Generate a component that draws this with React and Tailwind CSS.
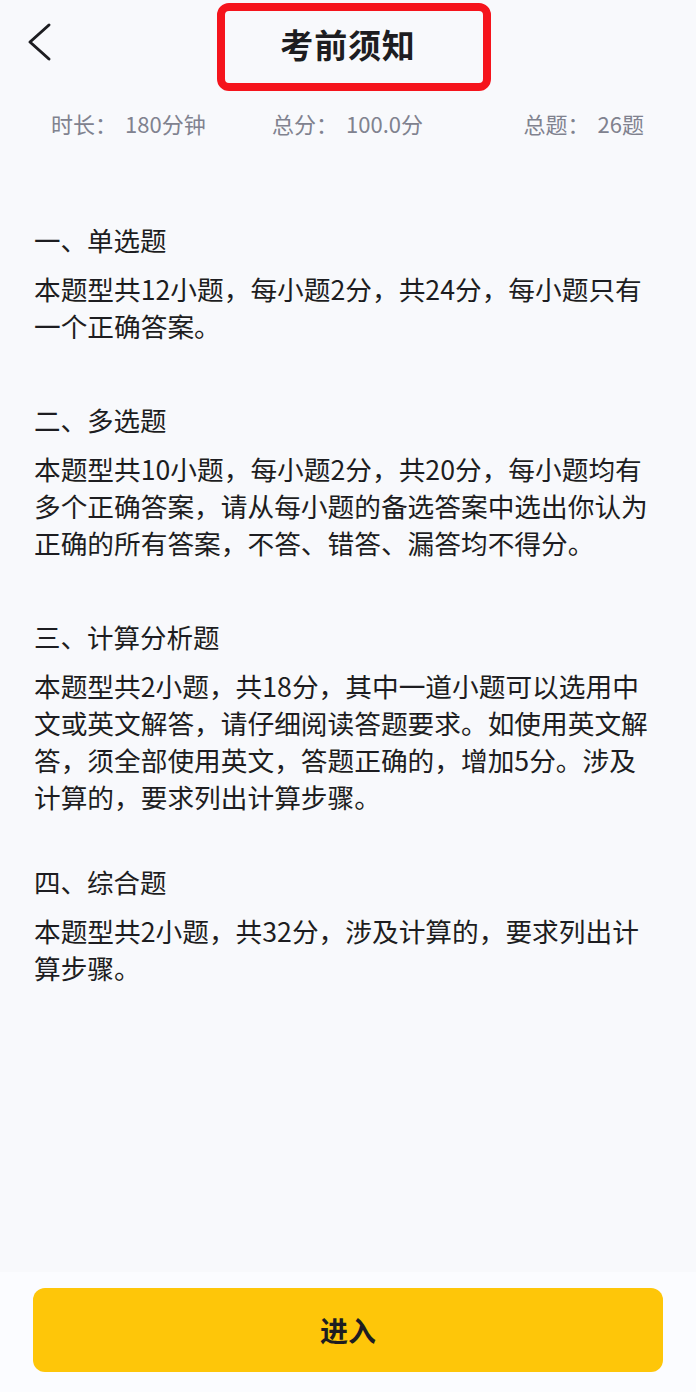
const stats = [
  { label: "时长：", value: "180分钟", align: "justify-self-start" },
  { label: "总分：", value: "100.0分", align: "justify-self-center" },
  { label: "总题：", value: "26题", align: "justify-self-end" },
];

// each line kept as in the screenshot so wraps land on the same characters
const sections = [
  {
    title: "一、单选题",
    space: "",
    lines: ["本题型共12小题，每小题2分，共24分，每小题只有", "一个正确答案。"],
  },
  {
    title: "二、多选题",
    space: "mt-[58px]",
    lines: [
      "本题型共10小题，每小题2分，共20分，每小题均有",
      "多个正确答案，请从每小题的备选答案中选出你认为",
      "正确的所有答案，不答、错答、漏答均不得分。",
    ],
  },
  {
    title: "三、计算分析题",
    space: "mt-[58px]",
    lines: [
      "本题型共2小题，共18分，其中一道小题可以选用中",
      "文或英文解答，请仔细阅读答题要求。如使用英文解",
      "答，须全部使用英文，答题正确的，增加5分。涉及",
      "计算的，要求列出计算步骤。",
    ],
  },
  {
    title: "四、综合题",
    space: "mt-[49px]",
    lines: ["本题型共2小题，共32分，涉及计算的，要求列出计", "算步骤。"],
  },
];

export default function App() {
  return (
    <div
      className="flex min-h-[1392px] w-[696px] flex-col bg-[#f8f9fc] text-[#1d1d21]"
      style={{ fontFamily: '"Noto Sans CJK SC", "Noto Sans", sans-serif' }}
    >
      <header className="relative flex h-[88px] items-center justify-center">
        <button className="absolute left-[26px] top-[22px] p-0">
          <svg width="26" height="40" viewBox="0 0 26 40" fill="none">
            <polyline
              points="23,3 4,20 23,37"
              stroke="#1d1d21"
              strokeWidth="3"
              strokeLinecap="round"
              strokeLinejoin="round"
            />
          </svg>
        </button>
        <h1 className="text-[33px] font-bold leading-none tracking-wide">考前须知</h1>
        <div className="pointer-events-none absolute left-[217px] top-[3px] h-[88px] w-[274px] rounded-[12px] border-[8px] border-[#f5141c]" />
      </header>

      <div className="mt-[20px] grid grid-cols-3 pl-[51px] pr-[52px] text-[22px] leading-[30px] text-[#80828f]">
        {stats.map((s) => (
          <span key={s.label} className={`${s.align} whitespace-nowrap`}>
            {s.label}
            <span className="ml-[8px]">{s.value}</span>
          </span>
        ))}
      </div>

      <main className="mt-[84px] flex flex-col px-[34px]">
        {sections.map((sec) => (
          <section key={sec.title} className={sec.space}>
            <h2 className="mb-3 text-[26.5px] leading-[36px]">{sec.title}</h2>
            <p className="text-[26.7px] leading-[37px]">
              {sec.lines.map((line) => (
                <span key={line} className="block whitespace-nowrap">
                  {line}
                </span>
              ))}
            </p>
          </section>
        ))}
      </main>

      <div className="mt-auto bg-[#fbfcff] px-[33px] pb-[20px] pt-[16px]">
        <button className="flex h-[84px] w-full items-center justify-center rounded-[12px] bg-[#fec609] text-[28px] font-bold text-[#1d1d21]">
          进入
        </button>
      </div>
    </div>
  );
}
